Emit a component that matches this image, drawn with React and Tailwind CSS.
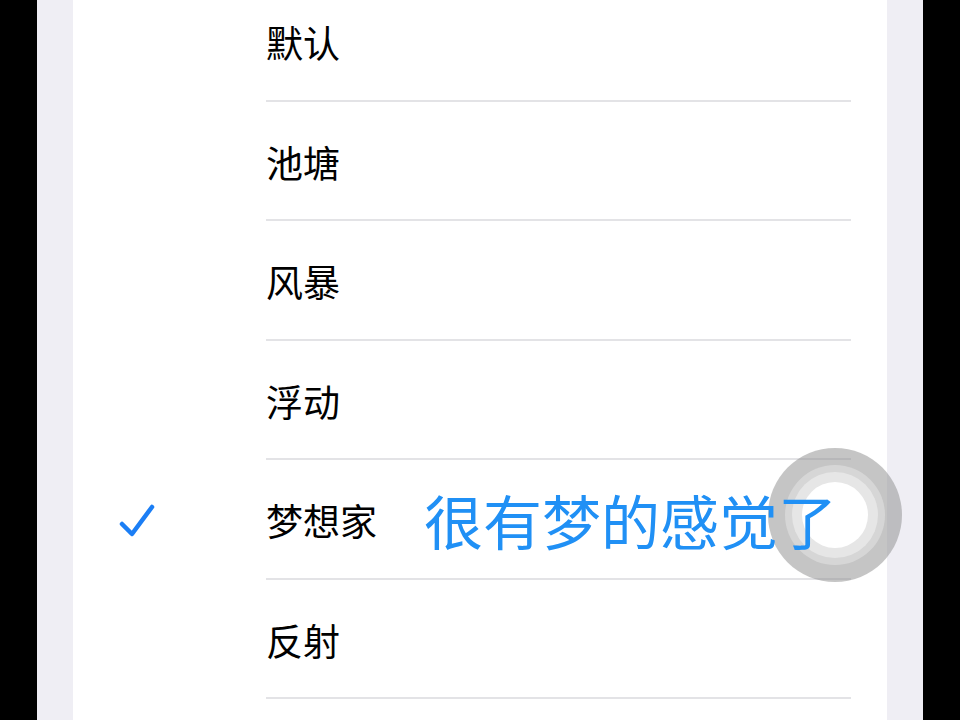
const ITEMS = ['默认', '池塘', '风暴', '浮动', '梦想家', '反射', '']

const CJK = { fontFamily: '"Noto Sans CJK SC", "Noto Sans", sans-serif' }

export default function App() {
  return (
    <div className="relative w-[960px] h-[720px] overflow-hidden bg-black flex" style={CJK}>
      <div className="w-[37px] bg-black" />
      <div className="w-[36px] bg-[#efeef4]" />

      {/* list card */}
      <div className="relative w-[814px] bg-white">
        <div className="-mt-[18px]">
          {ITEMS.map((label, i) => (
            <div key={i} className="flex h-[119.5px]">
              <div className="w-[193px] flex items-center pl-[45px] pt-[4px]">
                {label === '梦想家' && (
                  <svg className="w-[40px] h-[40px]" viewBox="0 0 40 40" fill="none">
                    <path d="M4 22l10 10L34 5" stroke="#1b7ef5" strokeWidth="4.5" strokeLinecap="round" strokeLinejoin="round" />
                  </svg>
                )}
              </div>
              <div className="flex-1 mr-[36px] border-b-2 border-[#e3e3e6] flex items-center pt-[4px]">
                <span className="text-[37px] leading-none text-black">{label}</span>
              </div>
            </div>
          ))}
        </div>

        {/* assistive touch button */}
        <div className="absolute z-10 left-[695px] top-[448px] w-[134px] h-[134px] rounded-full bg-[#8c8c8c]/50 flex items-center justify-center">
          <div className="w-[100px] h-[100px] rounded-full bg-[#d6d6d6] flex items-center justify-center">
            <div className="w-[86px] h-[86px] rounded-full bg-[#e6e6e6] flex items-center justify-center">
              <div className="w-[66px] h-[66px] rounded-full bg-white" />
            </div>
          </div>
        </div>
      </div>

      <div className="w-[36px] bg-[#efeef4]" />
      <div className="flex-1 bg-black" />

      {/* subtitle overlay */}
      <div className="absolute z-20 left-[424px] top-[490px] text-[59px] leading-none text-[#2090f5] whitespace-nowrap">
        很有梦的感觉了
      </div>
    </div>
  )
}
